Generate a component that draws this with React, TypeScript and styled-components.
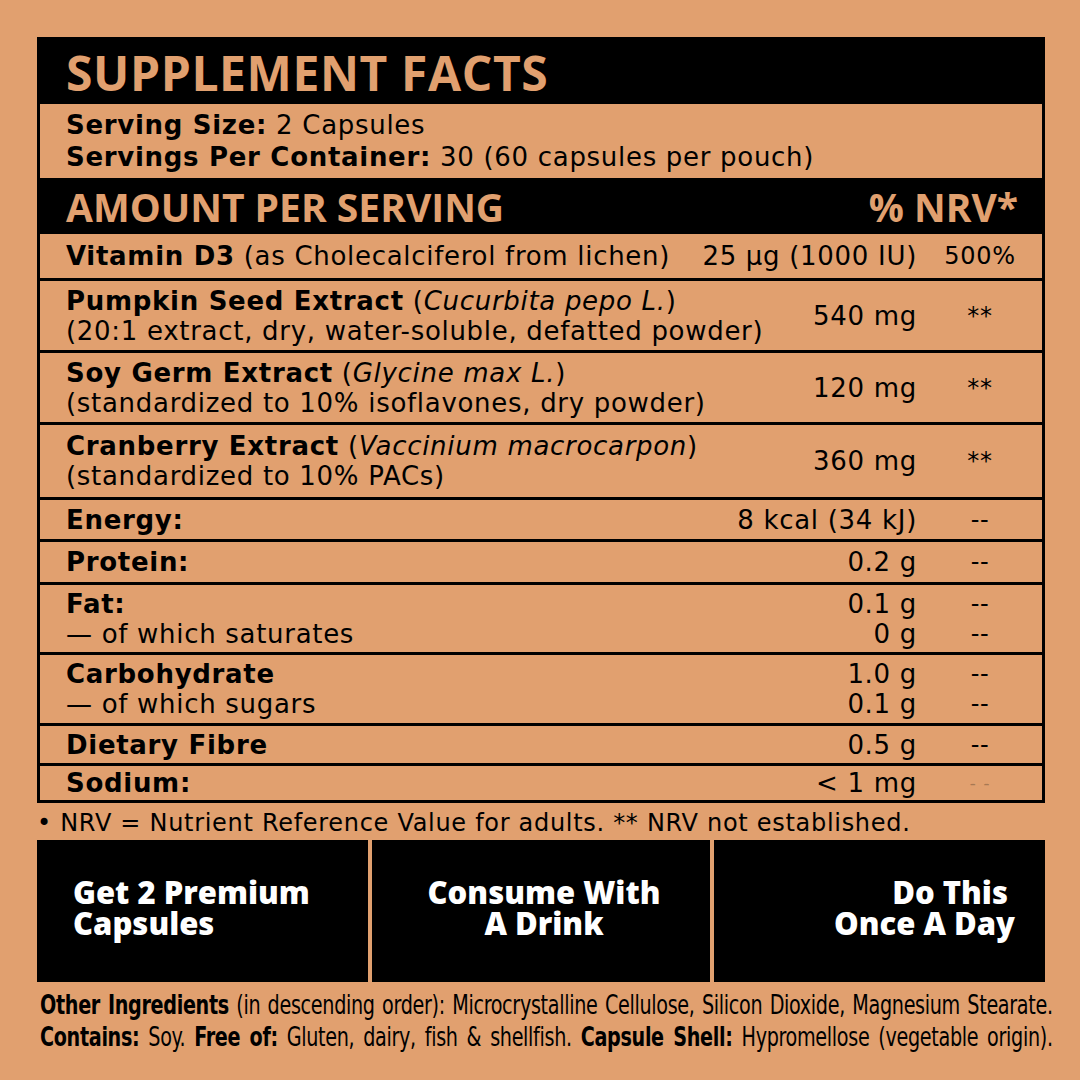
import React from 'react';
import styled, { createGlobalStyle } from 'styled-components';

const ORANGE = '#E1A06F';
const BODY = `"DejaVu Sans", "Open Sans", sans-serif`;
const HEAD = `"Open Sans", "DejaVu Sans", sans-serif`;
const NARROW = `"DejaVu Sans Condensed", "DejaVu Sans", sans-serif`;

const Global = createGlobalStyle`
  html, body { margin: 0; padding: 0; background: ${ORANGE}; }
  body { width: 1080px; height: 1080px; overflow: hidden; font-family: ${BODY}; color: #000; }
`;

const Page = styled.div`
  width: 1080px;
  height: 1080px;
  box-sizing: border-box;
  padding: 37px 35px 0 37px;
  background: ${ORANGE};
  display: flex;
  flex-direction: column;
`;

const Table = styled.div`
  border: 3px solid #000;
  display: flex;
  flex-direction: column;
`;

const Title = styled.div`
  height: 64px;
  background: #000;
  color: ${ORANGE};
  font-family: ${HEAD};
  font-size: 48px;
  font-weight: 700;
  letter-spacing: 0.6px;
  display: flex;
  align-items: center;
  padding-left: 26px;
`;

const Serving = styled.div`
  padding: 5px 26px 5px;
  font-size: 26px;
  letter-spacing: 0.7px;
  line-height: 32px;
`;

const Band = styled.div`
  height: 56px;
  background: #000;
  color: ${ORANGE};
  font-family: ${HEAD};
  font-size: 39px;
  font-weight: 700;
  display: flex;
  align-items: center;
  justify-content: space-between;
  padding: 0 24px 0 26px;
`;

const Row = styled.div<{ $h: number; $first?: boolean }>`
  box-sizing: border-box;
  height: ${(p) => p.$h}px;
  border-top: ${(p) => (p.$first ? '0' : '3px solid #000')};
  display: flex;
  flex-direction: column;
  justify-content: center;
`;

const Line = styled.div`
  display: grid;
  grid-template-columns: 1fr auto 76px;
  column-gap: 25px;
  align-items: center;
  padding: 0 24px 0 26px;
  font-size: 26px;
  letter-spacing: 0.7px;
  line-height: 30px;
`;

const Name = styled.div`
  white-space: nowrap;
`;

const Amount = styled.div`
  text-align: right;
  white-space: nowrap;
`;

const Nrv = styled.div<{ $faint?: boolean }>`
  text-align: center;
  white-space: nowrap;
  color: ${(p) => (p.$faint ? 'rgba(0,0,0,0.25)' : '#000')};
  font-size: ${(p) => (p.$faint ? '18px' : '24px')};
`;

const B = styled.b`
  font-weight: 700;
`;

const I = styled.i`
  font-style: italic;
`;

const Footnote = styled.div`
  font-size: 24px;
  letter-spacing: 0.7px;
  line-height: 34px;
  height: 34px;
  padding-top: 3px;
  white-space: nowrap;
`;

const Steps = styled.div`
  display: grid;
  grid-template-columns: 331px 338px 331px;
  column-gap: 4px;
  height: 142px;
`;

const Step = styled.div<{ $align: 'left' | 'center' | 'right' }>`
  background: #000;
  color: #fff;
  font-family: ${HEAD};
  font-size: 31px;
  font-weight: 800;
  line-height: 31px;
  display: flex;
  flex-direction: column;
  justify-content: center;
  padding: 0 30px 6px 36px;
  text-align: ${(p) => p.$align};
`;

const Nudge = styled.span`
  margin-right: 7px;
`;

const Bottom = styled.div`
  margin-top: 7px;
  margin-left: 3px;
  width: 1235px;
  font-family: ${NARROW};
  font-stretch: condensed;
  font-size: 26px;
  line-height: 32px;
  letter-spacing: -0.4px;
  transform: scaleX(0.82);
  transform-origin: left top;
`;

const BottomLine = styled.div`
  white-space: nowrap;
  text-align: justify;
  text-align-last: justify;
`;

type Nut = { name: React.ReactNode; amount: string; nrv: string; faint?: boolean };

const App: React.FC = () => {
  const extracts = [
    {
      title: 'Pumpkin Seed Extract',
      latin: 'Cucurbita pepo L.',
      detail: '(20:1 extract, dry, water-soluble, defatted powder)',
      amount: '540 mg',
      h: 72,
    },
    {
      title: 'Soy Germ Extract',
      latin: 'Glycine max L.',
      detail: '(standardized to 10% isoflavones, dry powder)',
      amount: '120 mg',
      h: 72,
    },
    {
      title: 'Cranberry Extract',
      latin: 'Vaccinium macrocarpon',
      detail: '(standardized to 10% PACs)',
      amount: '360 mg',
      h: 75,
    },
  ];

  const groups: { h: number; lines: Nut[] }[] = [
    { h: 42, lines: [{ name: <B>Energy:</B>, amount: '8 kcal (34 kJ)', nrv: '--' }] },
    { h: 43, lines: [{ name: <B>Protein:</B>, amount: '0.2 g', nrv: '--' }] },
    {
      h: 70,
      lines: [
        { name: <B>Fat:</B>, amount: '0.1 g', nrv: '--' },
        { name: '— of which saturates', amount: '0 g', nrv: '--' },
      ],
    },
    {
      h: 71,
      lines: [
        { name: <B>Carbohydrate</B>, amount: '1.0 g', nrv: '--' },
        { name: '— of which sugars', amount: '0.1 g', nrv: '--' },
      ],
    },
    { h: 40, lines: [{ name: <B>Dietary Fibre</B>, amount: '0.5 g', nrv: '--' }] },
    { h: 37, lines: [{ name: <B>Sodium:</B>, amount: '< 1 mg', nrv: '- -', faint: true }] },
  ];

  return (
    <>
      <Global />
      <Page>
        <Table>
          <Title>SUPPLEMENT FACTS</Title>
          <Serving>
            <div>
              <B>Serving Size:</B> 2 Capsules
            </div>
            <div>
              <B>Servings Per Container:</B> 30 (60 capsules per pouch)
            </div>
          </Serving>
          <Band>
            <span>AMOUNT PER SERVING</span>
            <span>% NRV*</span>
          </Band>
          <Row $first $h={44}>
            <Line>
              <Name>
                <B>Vitamin D3</B> (as Cholecalciferol from lichen)
              </Name>
              <Amount>25 µg (1000 IU)</Amount>
              <Nrv>500%</Nrv>
            </Line>
          </Row>
          {extracts.map((e) => (
            <Row key={e.title} $h={e.h}>
              <Line>
                <Name>
                  <div>
                    <B>{e.title}</B> (<I>{e.latin}</I>)
                  </div>
                  <div>{e.detail}</div>
                </Name>
                <Amount>{e.amount}</Amount>
                <Nrv>**</Nrv>
              </Line>
            </Row>
          ))}
          {groups.map((g, gi) => (
            <Row key={gi} $h={g.h}>
              {g.lines.map((n, ni) => (
                <Line key={ni}>
                  <Name>{n.name}</Name>
                  <Amount>{n.amount}</Amount>
                  <Nrv $faint={n.faint}>{n.nrv}</Nrv>
                </Line>
              ))}
            </Row>
          ))}
        </Table>
        <Footnote>• NRV = Nutrient Reference Value for adults. ** NRV not established.</Footnote>
        <Steps>
          <Step $align="left">
            <div>Get 2 Premium</div>
            <div>Capsules</div>
          </Step>
          <Step $align="center">
            <div>Consume With</div>
            <div>A Drink</div>
          </Step>
          <Step $align="right">
            <div>
              <Nudge>Do This</Nudge>
            </div>
            <div>Once A Day</div>
          </Step>
        </Steps>
        <Bottom>
          <BottomLine>
            <B>Other Ingredients</B> (in descending order): Microcrystalline Cellulose, Silicon Dioxide, Magnesium Stearate.
          </BottomLine>
          <BottomLine>
            <B>Contains:</B> Soy. <B>Free of:</B> Gluten, dairy, fish &amp; shellfish. <B>Capsule Shell:</B> Hypromellose (vegetable origin).
          </BottomLine>
        </Bottom>
      </Page>
    </>
  );
};

export default App;
